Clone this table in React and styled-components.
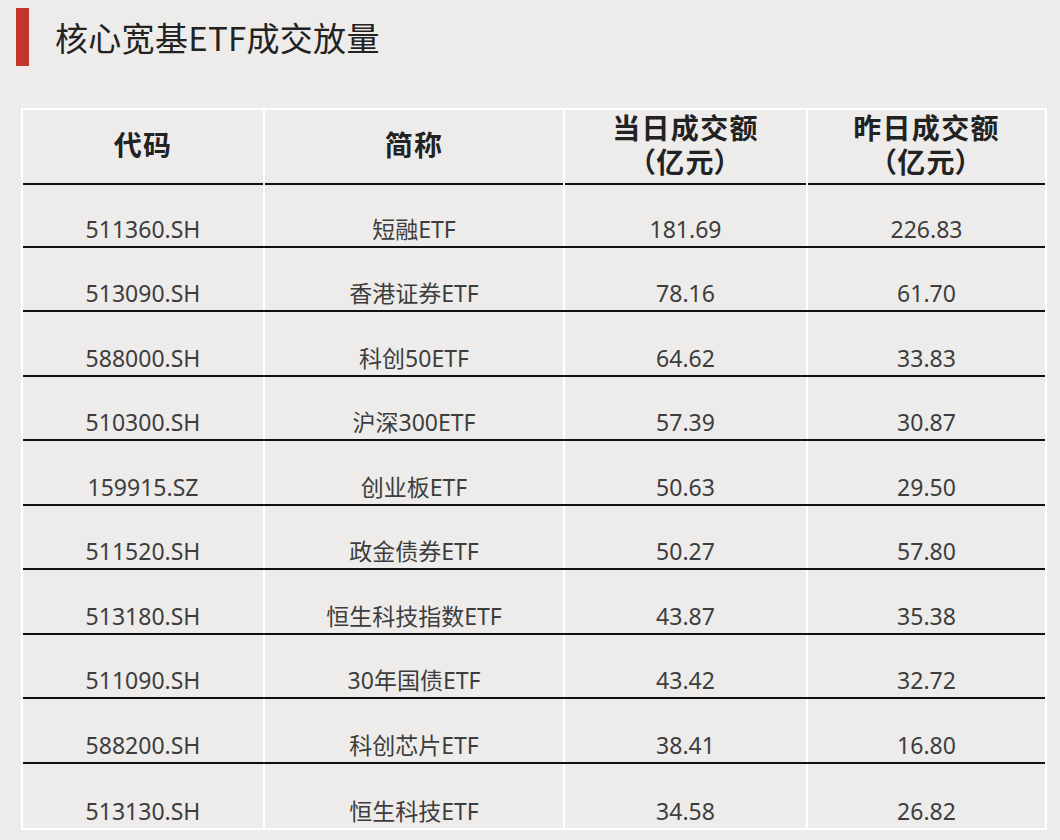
import React from 'react';
import styled, { createGlobalStyle } from 'styled-components';

const rows = [
    { code: '511360.SH', name: '短融ETF', today: '181.69', yesterday: '226.83' },
    { code: '513090.SH', name: '香港证券ETF', today: '78.16', yesterday: '61.70' },
    { code: '588000.SH', name: '科创50ETF', today: '64.62', yesterday: '33.83' },
    { code: '510300.SH', name: '沪深300ETF', today: '57.39', yesterday: '30.87' },
    { code: '159915.SZ', name: '创业板ETF', today: '50.63', yesterday: '29.50' },
    { code: '511520.SH', name: '政金债券ETF', today: '50.27', yesterday: '57.80' },
    { code: '513180.SH', name: '恒生科技指数ETF', today: '43.87', yesterday: '35.38' },
    { code: '511090.SH', name: '30年国债ETF', today: '43.42', yesterday: '32.72' },
    { code: '588200.SH', name: '科创芯片ETF', today: '38.41', yesterday: '16.80' },
    { code: '513130.SH', name: '恒生科技ETF', today: '34.58', yesterday: '26.82' },
];

const GlobalStyle = createGlobalStyle`
    html, body {
        margin: 0;
        padding: 0;
        background: #edecea;
    }
    body {
        font-family: "Noto Sans", "Noto Sans CJK SC", sans-serif;
    }
`;

const Page = styled.div`
    width: 1060px;
    height: 840px;
    overflow: hidden;
    background: #edecea;
    padding: 8px 0 0 16px;
    box-sizing: border-box;
`;

const TitleBar = styled.div`
    display: flex;
    align-items: center;
    gap: 26px;
    height: 58px;
`;

const RedMark = styled.span`
    width: 13px;
    height: 58px;
    background: #c1352c;
`;

const Title = styled.h1`
    margin: 0;
    font-family: "Noto Sans CJK SC", sans-serif;
    font-size: 33px;
    font-weight: 400;
    color: #222;
    letter-spacing: 0.3px;
`;

const Table = styled.div`
    width: 1026px;
    margin: 42px 0 0 5px;
    border: 2px solid #fff;
    box-sizing: border-box;
`;

const Row = styled.div`
    display: grid;
    grid-template-columns: 240px 300px 243px 1fr;
    height: ${p => p.$height}px;
    border-bottom: ${p => (p.$last ? 'none' : '2px solid #111')};
    box-sizing: border-box;
`;

const HeadCell = styled.div`
    display: flex;
    flex-direction: column;
    align-items: center;
    justify-content: center;
    padding-bottom: 5px;
    border-bottom: 2px solid #111;
    border-left: ${p => (p.$first ? 'none' : '2px solid #fff')};
    font-family: "Noto Sans CJK SC", sans-serif;
    font-size: 28px;
    font-weight: 700;
    color: #222;
    letter-spacing: 1.3px;
`;

const HeadLine = styled.div`
    height: 34px;
    line-height: 34px;
    overflow: visible;
    font-feature-settings: ${p => (p.$paren ? '"palt"' : 'normal')};
`;

const Cell = styled.div`
    display: flex;
    align-items: flex-end;
    justify-content: center;
    padding-bottom: 2px;
    border-left: ${p => (p.$first ? 'none' : '2px solid #fff')};
    font-family: "Noto Sans", "Noto Sans CJK SC", sans-serif;
    font-size: 23px;
    line-height: 30px;
    color: #3d3d3d;
`;

const App = () => {
    return (
        <Page>
            <GlobalStyle />
            <TitleBar>
                <RedMark />
                <Title>核心宽基ETF成交放量</Title>
            </TitleBar>
            <Table>
                <Row $height={73} $last>
                    <HeadCell $first>代码</HeadCell>
                    <HeadCell>简称</HeadCell>
                    <HeadCell>
                        <HeadLine>当日成交额</HeadLine>
                        <HeadLine $paren>（亿元）</HeadLine>
                    </HeadCell>
                    <HeadCell>
                        <HeadLine>昨日成交额</HeadLine>
                        <HeadLine $paren>（亿元）</HeadLine>
                    </HeadCell>
                </Row>
                {rows.map((r, i) => (
                    <Row key={r.code} $height={64.5} $last={i === rows.length - 1}>
                        <Cell $first>{r.code}</Cell>
                        <Cell>{r.name}</Cell>
                        <Cell>{r.today}</Cell>
                        <Cell>{r.yesterday}</Cell>
                    </Row>
                ))}
            </Table>
        </Page>
    );
};

export default App;
